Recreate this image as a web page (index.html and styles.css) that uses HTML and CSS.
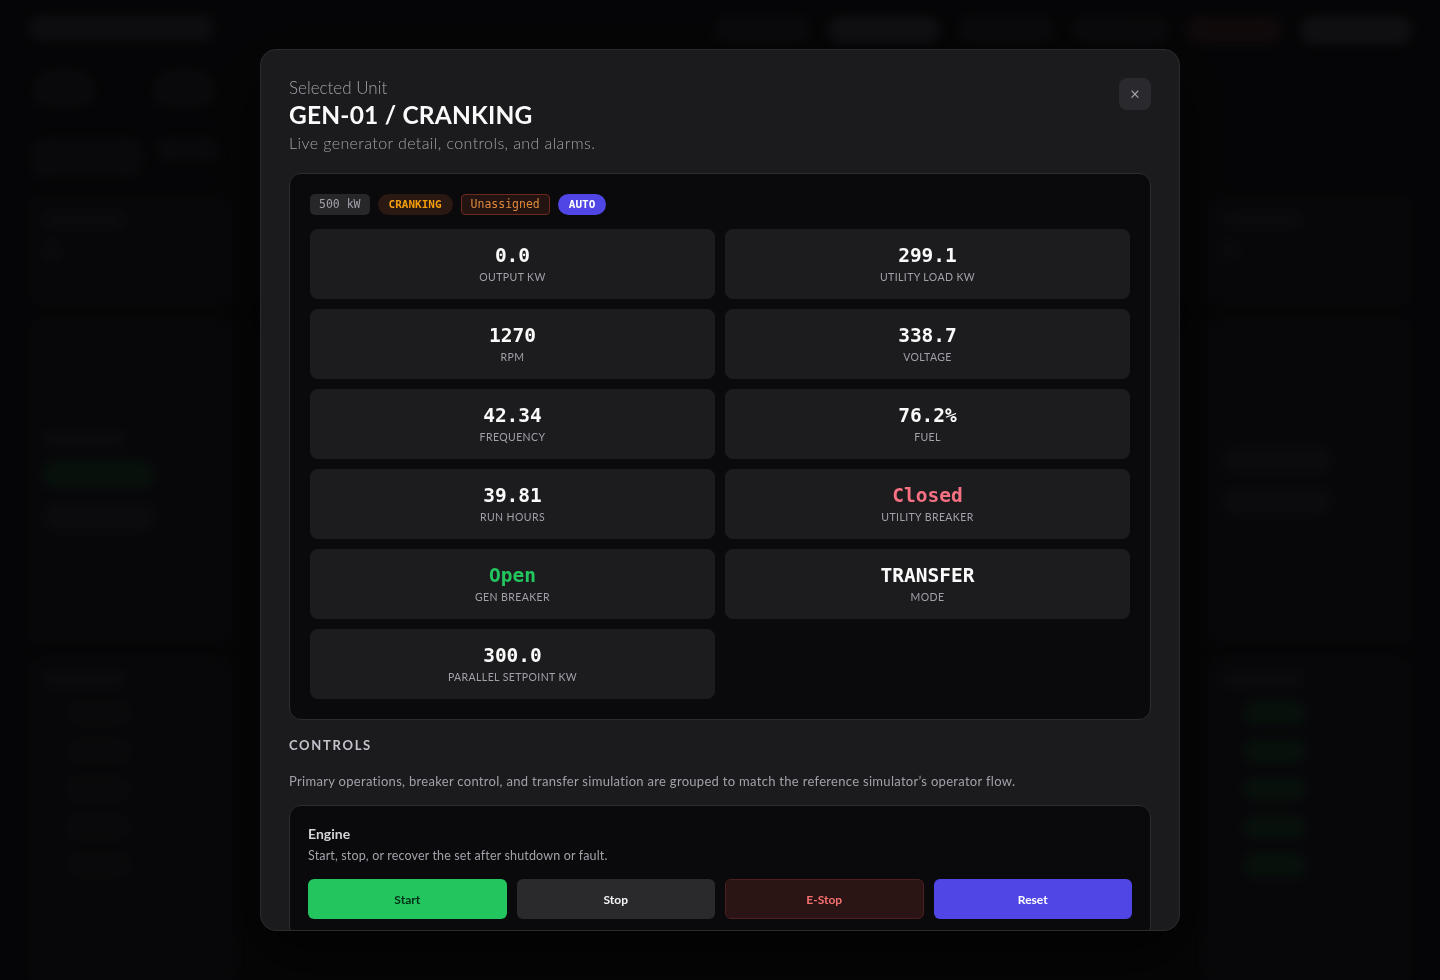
FILE: index.html
```html
<!DOCTYPE html>
<html lang="en">

<head>
    <meta charset="UTF-8">
    <meta name="viewport" content="width=device-width, initial-scale=1.0">
    <title>Generator Fleet - GEN-01</title>
    <link rel="stylesheet" href="styles.css">
</head>

<body>
    <!-- Dashboard behind the dialog -->
    <div class="backdrop" aria-hidden="true">
        <header class="bg-top">
            <div class="bg-brand"></div>
            <nav class="bg-nav">
                <span></span>
                <span class="light"></span>
                <span></span>
                <span></span>
                <span class="red"></span>
                <span class="light"></span>
            </nav>
        </header>
        <div class="bg-icons">
            <span></span>
            <span></span>
        </div>
        <div class="bg-tabs">
            <span></span>
            <span></span>
        </div>
        <div class="bg-body">
            <aside class="bg-col">
                <div class="bg-card short"><i></i><i class="dot"></i></div>
                <div class="bg-card tall"><i></i><i class="pill green"></i><i class="pill"></i></div>
                <div class="bg-card list">
                    <i></i>
                    <b></b><b></b><b></b><b></b><b></b>
                </div>
            </aside>
            <main class="bg-main">
                <div class="bg-strip"></div>
            </main>
            <aside class="bg-col">
                <div class="bg-card short"><i></i><i class="dot"></i></div>
                <div class="bg-card tall"><i class="pill"></i><i class="pill"></i></div>
                <div class="bg-card list">
                    <i></i>
                    <b class="green"></b><b class="green"></b><b class="green"></b><b class="green"></b><b class="green"></b>
                </div>
            </aside>
        </div>
    </div>

    <div class="overlay">
        <section class="modal" role="dialog" aria-labelledby="unit-title">
            <div class="modal-head">
                <div>
                    <p class="eyebrow">Selected Unit</p>
                    <h2 id="unit-title">GEN-01 / CRANKING</h2>
                    <p class="lede">Live generator detail, controls, and alarms.</p>
                </div>
                <button class="close" aria-label="Close">&times;</button>
            </div>

            <div class="panel">
                <div class="badges">
                    <span class="badge size">500 kW</span>
                    <span class="badge state">CRANKING</span>
                    <span class="badge group">Unassigned</span>
                    <span class="badge mode">AUTO</span>
                </div>

                <div class="metrics">
                    <div class="metric"><strong>0.0</strong><span>Output kW</span></div>
                    <div class="metric"><strong>299.1</strong><span>Utility Load kW</span></div>
                    <div class="metric"><strong>1270</strong><span>RPM</span></div>
                    <div class="metric"><strong>338.7</strong><span>Voltage</span></div>
                    <div class="metric"><strong>42.34</strong><span>Frequency</span></div>
                    <div class="metric"><strong>76.2%</strong><span>Fuel</span></div>
                    <div class="metric"><strong>39.81</strong><span>Run Hours</span></div>
                    <div class="metric"><strong class="bad">Closed</strong><span>Utility Breaker</span></div>
                    <div class="metric"><strong class="good">Open</strong><span>Gen Breaker</span></div>
                    <div class="metric"><strong>TRANSFER</strong><span>Mode</span></div>
                    <div class="metric"><strong>300.0</strong><span>Parallel Setpoint kW</span></div>
                </div>
            </div>

            <h3 class="section-title">Controls</h3>
            <p class="section-note">Primary operations, breaker control, and transfer simulation are grouped to match the reference simulator’s operator flow.</p>

            <div class="group-card">
                <h4>Engine</h4>
                <p>Start, stop, or recover the set after shutdown or fault.</p>
                <div class="actions">
                    <button class="btn start">Start</button>
                    <button class="btn stop">Stop</button>
                    <button class="btn estop">E-Stop</button>
                    <button class="btn reset">Reset</button>
                </div>
            </div>
        </section>
    </div>
</body>

</html>
```

FILE: styles.css
```css
* {
    box-sizing: border-box;
}

html,
body {
    height: 100%;
}

body {
    margin: 0;
    background-color: #09090b;
    color: #f4f4f5;
    font-family: "Lato", "Noto Sans", sans-serif;
    overflow: hidden;
}

button {
    font-family: inherit;
    cursor: pointer;
}

/* Dashboard underneath, dimmed and out of focus */
.backdrop {
    height: 100vh;
    padding: 12px 28px 0;
    filter: blur(5px);
    opacity: 0.85;
}

.bg-top {
    display: flex;
    justify-content: space-between;
    align-items: center;
}

.bg-brand {
    width: 186px;
    height: 26px;
    border-radius: 13px;
    background: #17171b;
}

.bg-nav {
    display: flex;
    gap: 18px;
    padding-top: 4px;
}

.bg-nav span {
    width: 96px;
    height: 28px;
    border-radius: 14px;
    background: #111114;
}

.bg-nav span.light {
    width: 112px;
    background: #1b1b1f;
}

.bg-nav span.red {
    background: #1a1012;
}

.bg-icons {
    display: flex;
    gap: 60px;
    padding: 26px 0 0 6px;
}

.bg-icons span {
    width: 60px;
    height: 36px;
    border-radius: 18px 18px 10px 10px;
    background: #111114;
}

.bg-tabs {
    display: flex;
    gap: 14px;
    padding: 32px 0 0 4px;
}

.bg-tabs span {
    width: 110px;
    height: 40px;
    border-radius: 12px;
    background: #101013;
}

.bg-tabs span + span {
    width: 64px;
    height: 24px;
}

.bg-body {
    display: grid;
    grid-template-columns: 207px 1fr 207px;
    gap: 16px;
    padding-top: 18px;
}

.bg-col {
    display: flex;
    flex-direction: column;
    gap: 12px;
}

.bg-card {
    display: flex;
    flex-direction: column;
    gap: 16px;
    padding: 16px;
    border-radius: 16px;
    background: #0d0d10;
}

.bg-card.short {
    height: 110px;
}

.bg-card.tall {
    height: 326px;
    justify-content: center;
}

.bg-card.list {
    height: 330px;
}

.bg-card i {
    display: block;
    width: 80px;
    height: 14px;
    border-radius: 7px;
    background: #141418;
}

.bg-card i.dot {
    width: 16px;
    height: 16px;
}

.bg-card i.pill {
    width: 110px;
    height: 26px;
    border-radius: 13px;
}

.bg-card i.green,
.bg-card b.green {
    background: #0c1f14;
}

.bg-card b {
    display: block;
    width: 60px;
    height: 22px;
    margin-left: 24px;
    border-radius: 11px;
    background: #111114;
}

.bg-main {
    padding-top: 110px;
}

.bg-strip {
    height: 18px;
    background: #060608;
}

/* Dialog layer */
.overlay {
    position: fixed;
    inset: 0;
    display: flex;
    align-items: center;
    justify-content: center;
    background: rgba(0, 0, 0, 0.35);
}

.modal {
    width: 920px;
    height: 882px;
    overflow: hidden;
    padding: 28px 28px 0;
    background: #1b1b1e;
    border: 1px solid #2c2c30;
    border-radius: 16px;
    box-shadow: 0 24px 60px rgba(0, 0, 0, 0.6);
}

.modal-head {
    display: flex;
    justify-content: space-between;
    align-items: flex-start;
}

.eyebrow {
    margin: 0;
    font-size: 17px;
    font-weight: 300;
    line-height: 20px;
    color: #a1a1aa;
}

.modal-head h2 {
    margin: 0;
    font-size: 24.5px;
    font-weight: 700;
    line-height: 34px;
    letter-spacing: 0.2px;
    color: #fafafa;
}

.lede {
    margin: 0;
    font-size: 16px;
    font-weight: 300;
    line-height: 22px;
    letter-spacing: 0.4px;
    color: #a1a1aa;
}

.close {
    width: 32px;
    height: 32px;
    padding: 0;
    border: 0;
    border-radius: 8px;
    background: #2a2a2e;
    color: #a1a1aa;
    font-size: 17px;
    line-height: 32px;
}

/* Live readings */
.panel {
    margin-top: 19px;
    padding: 20px;
    background: #0a0a0c;
    border: 1px solid #2c2c30;
    border-radius: 12px;
}

.badges {
    display: flex;
    gap: 8px;
    align-items: center;
}

.badge {
    height: 21px;
    padding: 0 9px;
    font-family: "DejaVu Sans Mono", "Liberation Mono", monospace;
    font-size: 11.5px;
    line-height: 21px;
    white-space: nowrap;
}

.badge.size {
    border-radius: 5px;
    background: #27272a;
    color: #a1a1aa;
}

.badge.state {
    padding: 0 11px;
    border-radius: 11px;
    background: #2a1812;
    color: #f59e0b;
    font-size: 11px;
    font-weight: 700;
}

.badge.group {
    padding: 0 9px;
    border: 1px solid #6b2a1c;
    border-radius: 4px;
    background: #231311;
    color: #e0893c;
    line-height: 19px;
}

.badge.mode {
    padding: 0 11px;
    border-radius: 11px;
    background: #4f46e5;
    color: #fff;
    font-size: 11px;
    font-weight: 700;
}

.metrics {
    display: grid;
    grid-template-columns: 1fr 1fr;
    gap: 10px;
    margin-top: 14px;
}

.metric {
    display: flex;
    flex-direction: column;
    align-items: center;
    justify-content: center;
    height: 70px;
    background: #1c1c1f;
    border-radius: 8px;
}

.metric strong {
    font-family: "DejaVu Sans Mono", "Liberation Mono", monospace;
    font-size: 19.5px;
    font-weight: 700;
    line-height: 24px;
    color: #fafafa;
}

.metric strong.bad {
    color: #f87182;
}

.metric strong.good {
    color: #22c55e;
}

.metric span {
    margin-top: 2px;
    font-size: 10.5px;
    line-height: 14px;
    letter-spacing: 0.4px;
    text-transform: uppercase;
    color: #a1a1aa;
}

/* Controls */
.section-title {
    margin: 16px 0 0;
    font-size: 13px;
    font-weight: 700;
    line-height: 18px;
    letter-spacing: 1.7px;
    text-transform: uppercase;
    color: #c4c4cc;
}

.section-note {
    margin: 18px 0 0;
    font-size: 13px;
    line-height: 18px;
    letter-spacing: 0.3px;
    color: #a1a1aa;
}

.group-card {
    margin-top: 15px;
    padding: 19px 18px 18px;
    background: #0a0a0c;
    border: 1px solid #2c2c30;
    border-radius: 12px;
}

.group-card h4 {
    margin: 0;
    font-size: 14px;
    font-weight: 700;
    line-height: 18px;
    color: #d4d4d8;
}

.group-card p {
    margin: 4px 0 0;
    font-size: 12.5px;
    line-height: 18px;
    letter-spacing: 0.15px;
    color: #a1a1aa;
}

.actions {
    display: grid;
    grid-template-columns: repeat(4, 1fr);
    gap: 10px;
    margin-top: 14px;
}

.btn {
    height: 40px;
    border: 1px solid transparent;
    border-radius: 6px;
    font-size: 12px;
    font-weight: 700;
}

.btn.start {
    background: #22c55e;
    color: #052e16;
}

.btn.stop {
    background: #2a2a2d;
    color: #f4f4f5;
}

.btn.estop {
    background: #2a1414;
    border-color: #4d1f1f;
    color: #f87171;
}

.btn.reset {
    background: #4f46e5;
    color: #fff;
}
```
